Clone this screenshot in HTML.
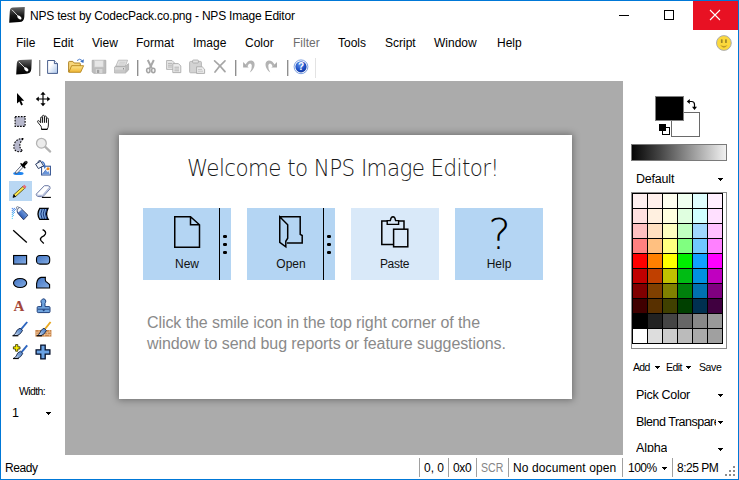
<!DOCTYPE html>
<html><head><meta charset="utf-8"><title>NPS Image Editor</title>
<style>
html,body{margin:0;padding:0;}
body{width:739px;height:480px;position:relative;overflow:hidden;background:#fff;font-family:"Liberation Sans",sans-serif;font-size:12px;color:#000;}
.t{position:absolute;white-space:nowrap;line-height:16px;}
.b{position:absolute;}
svg{position:absolute;overflow:visible;}
#frame{position:absolute;left:0;top:0;width:737px;height:478px;border:1px solid #0078d7;z-index:50;pointer-events:none;}
#canvas{position:absolute;left:65px;top:81px;width:558px;height:374px;background:#ababab;}
#close{position:absolute;left:693px;top:1px;width:45px;height:29px;background:#e81123;}
.sep{position:absolute;width:1px;height:16px;top:60px;background:#8f8f8f;border-right:1px solid #d4d4d4;}
.ssep{position:absolute;width:1px;height:19px;top:458px;background:#a0a0a0;}
.arr{position:absolute;width:5px;height:1px;background:#000;}
.arr:before{content:'';position:absolute;left:1px;top:1px;width:3px;height:1px;background:#000;}
.arr:after{content:'';position:absolute;left:2px;top:2px;width:1px;height:1px;background:#000;}
#dlg{position:absolute;left:119px;top:134.6px;width:453.2px;height:264.2px;background:#fff;box-shadow:0 0 7px 1px rgba(0,0,0,0.36);}
.btn{position:absolute;top:208px;width:88px;height:72px;background:#b4d5f3;}
.lbl{position:absolute;top:256px;width:88px;text-align:center;line-height:16px;color:#111;}
.split{position:absolute;top:208px;width:1px;height:72px;background:#000;}
.dot{position:absolute;width:4px;height:2.6px;background:#000;border-radius:1.2px;}
</style></head><body>
<div id="canvas"></div>
<svg style="left:9px;top:7px" width="16" height="16" viewBox="0 0 16 16"><defs><linearGradient id="ig" x1="0" y1="0" x2="0" y2="1"><stop offset="0" stop-color="#686868"/><stop offset="0.55" stop-color="#161616"/><stop offset="1" stop-color="#000"/></linearGradient></defs><path d="M4 0.6 L15.8 0 L15.3 10 Q15 15 10.5 15 L0.2 15.8 L0.8 4.4 Q1 0.9 4 0.6Z" fill="url(#ig)"/><path d="M3.2 3 L9 9" stroke="#e6e6e6" stroke-width="0.9" stroke-linecap="round"/><ellipse cx="10.4" cy="10.5" rx="2.5" ry="1.5" transform="rotate(42 10.4 10.5)" fill="#fff"/></svg>
<div class="t" style="left:30px;top:8px;letter-spacing:-0.2px">NPS test by CodecPack.co.png - NPS Image Editor</div>
<div class="b" style="left:619px;top:15px;width:10px;height:1px;background:#000"></div>
<div class="b" style="left:664px;top:10px;width:8px;height:8px;border:1px solid #000"></div>
<div id="close"></div>
<svg style="left:710px;top:10px" width="10" height="10" viewBox="0 0 10 10"><path d="M0 0L10 10M10 0L0 10" stroke="#fff" stroke-width="1.1"/></svg>
<div class="t" style="left:16px;top:35px">File</div>
<div class="t" style="left:53px;top:35px">Edit</div>
<div class="t" style="left:92px;top:35px">View</div>
<div class="t" style="left:136px;top:35px">Format</div>
<div class="t" style="left:193px;top:35px">Image</div>
<div class="t" style="left:245px;top:35px">Color</div>
<div class="t" style="left:293px;top:35px;color:#6d6d6d">Filter</div>
<div class="t" style="left:338px;top:35px">Tools</div>
<div class="t" style="left:385px;top:35px">Script</div>
<div class="t" style="left:434px;top:35px">Window</div>
<div class="t" style="left:497px;top:35px">Help</div>
<svg style="left:716px;top:35px" width="16" height="16" viewBox="0 0 16 16"><circle cx="7.9" cy="8" r="7.4" fill="#fcd93c" stroke="#a2a6b6" stroke-width="0.9"/><rect x="4.9" y="4.2" width="1.7" height="3.8" rx="0.6" fill="#9c8628"/><rect x="9.1" y="4.2" width="1.7" height="3.8" rx="0.6" fill="#9c8628"/><path d="M4.2 10 Q7.9 11.8 11.6 10 Q7.9 15.4 4.2 10Z" fill="#c09c28"/></svg>
<div class="sep" style="left:39px"></div><div class="sep" style="left:137px"></div><div class="sep" style="left:235px"></div><div class="sep" style="left:287px"></div><div class="b" style="left:315px;top:58px;width:1px;height:20px;background:#e3e3e3"></div>
<svg style="left:16px;top:59px" width="16" height="16" viewBox="0 0 16 16"><path d="M4 1 L15.8 0.5 L15.3 10 Q15 14.6 10.5 14.7 L0.2 15.4 L0.8 4.6 Q1 1.2 4 1Z" fill="url(#ig)"/><path d="M3.2 3.2 L9 9" stroke="#e6e6e6" stroke-width="0.9" stroke-linecap="round"/><ellipse cx="10.3" cy="10.4" rx="2.5" ry="1.5" transform="rotate(42 10.3 10.4)" fill="#fff"/></svg>
<svg style="left:45px;top:59px" width="16" height="16" viewBox="0 0 16 16"><defs><linearGradient id="ng" x1="0" y1="0" x2="1" y2="1"><stop offset="0.35" stop-color="#fff"/><stop offset="1" stop-color="#a9c4ea"/></linearGradient></defs><path d="M2.6 1.5 H9.4 L12.5 4.6 V14.4 H2.6Z" fill="url(#ng)" stroke="#2c447a" stroke-width="0.85"/><path d="M9.4 1.5 V4.6 H12.5" fill="#e6eefa" stroke="#2c447a" stroke-width="0.85"/></svg>
<svg style="left:68px;top:58px" width="17" height="16" viewBox="0 0 17 16"><defs><linearGradient id="fg" x1="0" y1="0" x2="0" y2="1"><stop offset="0" stop-color="#fde48c"/><stop offset="1" stop-color="#efb532"/></linearGradient></defs><path d="M0.6 14 V4.2 Q0.6 3.4 1.4 3.4 H4.8 L6.2 5 H11.5 Q12.3 5 12.3 5.8 V8" fill="#f7d67a" stroke="#a87a18" stroke-width="0.9"/><path d="M0.8 14.3 L3.6 7.7 H15.6 L12.6 14.3Z" fill="url(#fg)" stroke="#b5851a" stroke-width="0.9"/><path d="M9 2.6 Q11.6 -0.2 14.3 2.6" fill="none" stroke="#3a6fc4" stroke-width="0.9"/><path d="M15.9 1.3 L15.4 5 L12.2 3.4Z" fill="#3a6fc4"/></svg>
<svg style="left:91px;top:59px" width="16" height="16" viewBox="0 0 16 16"><path d="M1.2 1.3 H14.8 V14.3 H2.6 L1.2 12.9Z" fill="#bdbdbd" stroke="#a9a9a9" stroke-width="0.8"/><rect x="3.6" y="1.6" width="8.6" height="6.4" fill="#e6e6e6" stroke="#cfcfcf" stroke-width="0.6"/><rect x="4.8" y="10" width="6.6" height="4.2" fill="#d6d6d6"/><rect x="6" y="10.8" width="2.2" height="3.2" fill="#a2a2a2"/></svg>
<svg style="left:114px;top:59px" width="16" height="16" viewBox="0 0 16 16"><path d="M4.4 1.2 H13.6 L11.2 7.4 H1.8Z" fill="#e4e4e4" stroke="#b4b4b4" stroke-width="0.8"/><path d="M5.5 3.2 H11.5 M4.8 5 H10.8" stroke="#c2c2c2" stroke-width="0.7"/><path d="M0.6 8 L1.8 7.2 H11.4 L14.6 4.6 V11 L11.4 14 H0.6Z" fill="#bcbcbc" stroke="#a8a8a8" stroke-width="0.7"/><rect x="0.8" y="8.2" width="10.4" height="2.6" fill="#d9d9d9"/><rect x="0.8" y="11" width="10.4" height="2.8" fill="#c8c8c8"/><rect x="9" y="9" width="1" height="1.4" fill="#8e8e8e"/></svg>
<svg style="left:143px;top:59px" width="16" height="16" viewBox="0 0 16 16"><path d="M4.8 1 L8.8 9.2 M10.8 1 L6.8 9.2" stroke="#a8a8a8" stroke-width="2" fill="none"/><ellipse cx="5.3" cy="11.5" rx="1.7" ry="2.2" fill="#f4f4f4" stroke="#a4a4a4" stroke-width="1.5"/><ellipse cx="10.3" cy="11.5" rx="1.7" ry="2.2" fill="#f4f4f4" stroke="#a4a4a4" stroke-width="1.5"/></svg>
<svg style="left:166px;top:59px" width="16" height="16" viewBox="0 0 16 16"><path d="M0.6 1.5 H6 L8.4 3.9 V10.4 H0.6Z" fill="#e8e8e8" stroke="#b0b0b0" stroke-width="0.9"/><path d="M2 4.4 H6 M2 6.2 H6 M2 8 H6" stroke="#a8a8a8" stroke-width="0.8"/><path d="M6.8 4.6 H12.4 L14.8 7 V13.6 H6.8Z" fill="#ececec" stroke="#aaaaaa" stroke-width="0.9"/><path d="M8.4 8.2 H13 M8.4 10 H13 M8.4 11.8 H13" stroke="#a6a6a6" stroke-width="0.8"/></svg>
<svg style="left:189px;top:59px" width="17" height="16" viewBox="0 0 17 16"><rect x="0.6" y="2.4" width="11.8" height="11.4" rx="1" fill="#d3d3d3" stroke="#b0b0b0" stroke-width="0.9"/><rect x="3.6" y="1" width="5.8" height="3" rx="0.8" fill="#e2e2e2" stroke="#a6a6a6" stroke-width="0.8"/><path d="M7.6 7.8 H13.2 L15.6 10.2 V14.4 H7.6Z" fill="#ececec" stroke="#a8a8a8" stroke-width="0.9"/><path d="M9 10.4 H13 M9 12.2 H14" stroke="#b4b4b4" stroke-width="0.7"/></svg>
<svg style="left:212px;top:59px" width="16" height="16" viewBox="0 0 16 16"><path d="M2.6 1.8 Q7.6 5.8 13 12.6 M13 1.8 Q7.6 6.6 3 13" stroke="#a6a6a6" stroke-width="1.7" fill="none" stroke-linecap="round"/></svg>
<svg style="left:241px;top:59px" width="16" height="16" viewBox="0 0 16 16"><path d="M2.1 3 V8.6 H7.7Z" fill="#adadad"/><path d="M4.4 5.8 Q6.8 1.2 10.4 1.4 Q13.8 2 13.6 6 Q13.2 10.4 8.8 13.6 Q11.2 9.6 10.8 6.6 Q10.4 4.4 9 4.4 Q7.6 4.6 6.4 7.4Z" fill="#b3b3b3"/></svg>
<svg style="left:264px;top:59px" width="16" height="16" viewBox="0 0 16 16"><g transform="translate(15.1,0) scale(-1,1)"><path d="M2.1 3 V8.6 H7.7Z" fill="#adadad"/><path d="M4.4 5.8 Q6.8 1.2 10.4 1.4 Q13.8 2 13.6 6 Q13.2 10.4 8.8 13.6 Q11.2 9.6 10.8 6.6 Q10.4 4.4 9 4.4 Q7.6 4.6 6.4 7.4Z" fill="#b3b3b3"/></g></svg>
<svg style="left:293px;top:59px" width="16" height="16" viewBox="0 0 16 16"><defs><radialGradient id="hg" cx="0.4" cy="0.3" r="0.8"><stop offset="0" stop-color="#5f8fe8"/><stop offset="0.6" stop-color="#1c4fc4"/><stop offset="1" stop-color="#0d2f94"/></radialGradient></defs><circle cx="8" cy="7.8" r="6.9" fill="#fff" stroke="#6f96dd" stroke-width="0.9"/><circle cx="8" cy="7.8" r="5.6" fill="url(#hg)"/><text x="8" y="11.4" text-anchor="middle" font-family="Liberation Sans, sans-serif" font-weight="bold" font-size="10" fill="#fff">?</text></svg>
<div class="b" style="left:9px;top:181px;width:23px;height:20px;background:#b9d7f3"></div>
<svg width="0" height="0" style="left:0;top:0"><defs><linearGradient id="bl" x1="0" y1="0" x2="1" y2="1"><stop offset="0" stop-color="#3f72c2"/><stop offset="1" stop-color="#86aee4"/></linearGradient><linearGradient id="br" x1="1" y1="0" x2="0" y2="1"><stop offset="0" stop-color="#3b73c8"/><stop offset="0.5" stop-color="#7fa5d8"/><stop offset="1" stop-color="#e8eef8"/></linearGradient></defs></svg>
<svg style="left:12px;top:91px" width="16" height="16" viewBox="0 0 16 16"><path d="M5 2 V12.6 L7.4 10.4 L9.2 14.4 L10.9 13.6 L9.1 9.7 H12.2Z" fill="#000"/></svg>
<svg style="left:35px;top:91px" width="16" height="16" viewBox="0 0 16 16"><path d="M8 2.5 V13.5 M2.5 8 H13.5" stroke="#000" stroke-width="1.2"/><path d="M8 0.8 L10.6 3.8 H5.4Z M8 15.2 L10.6 12.2 H5.4Z M0.8 8 L3.8 5.4 V10.6Z M15.2 8 L12.2 5.4 V10.6Z" fill="#000"/></svg>
<svg style="left:12px;top:114px" width="16" height="16" viewBox="0 0 16 16"><rect x="3.1" y="2.6" width="10" height="9.8" fill="#b7b8cc" stroke="#000" stroke-width="1.1" stroke-dasharray="1.6 1.3"/></svg>
<svg style="left:35px;top:114px" width="16" height="17" viewBox="0 0 16 17"><path d="M6 12.2 L3.2 8.8 Q2 7.4 2.8 6.8 Q3.8 6.2 4.8 7.6 L5.6 8.8 V4.2 Q5.6 3 6.5 3 Q7.4 3 7.4 4.2 V2.4 Q7.4 1.3 8.4 1.3 Q9.4 1.3 9.4 2.4 V3 Q9.4 2 10.4 2 Q11.4 2 11.4 3.2 V5 Q11.4 4 12.4 4 Q13.4 4 13.4 5.2 V11 Q13.4 13.4 12.2 15.3 H6.6 Q6.6 13.6 6 12.2Z" fill="#fff" stroke="#222" stroke-width="1"/><path d="M7.4 4 V8.8 M9.4 3 V8.8 M11.4 5 V8.8" stroke="#000" stroke-width="1"/><path d="M6.4 15.4 H12.4" stroke="#000" stroke-width="1.2"/></svg>
<svg style="left:12px;top:137px" width="16" height="16" viewBox="0 0 16 16"><path d="M11.4 1.6 Q4.5 1.2 2.4 6.6 Q0.6 11.6 4.4 14.4 Q8 15.2 10.6 14 Q6.4 10.4 8.6 5.4 Q9.6 3.2 11.4 1.6Z" fill="#b7b8cc" stroke="#000" stroke-width="1.1" stroke-dasharray="1.6 1.3"/></svg>
<svg style="left:35px;top:137px" width="17" height="16" viewBox="0 0 17 16"><path d="M10 9.6 L15.2 14.6" stroke="#b2b2b2" stroke-width="2.2" stroke-linecap="round"/><circle cx="6.4" cy="6.2" r="4.9" fill="#ececec" stroke="#b4b4b4" stroke-width="1.3"/></svg>
<svg style="left:12px;top:160px" width="17" height="16" viewBox="0 0 17 16"><ellipse cx="6.4" cy="13.4" rx="5.2" ry="1.6" fill="#1e84f0"/><path d="M3.4 13.6 L3.9 11.4 L9.9 4.9 L11.7 6.6 L5.6 13 Z" fill="#f4f6fa" stroke="#424a60" stroke-width="0.8"/><path d="M9 3.8 L12.8 7.6" stroke="#000" stroke-width="1.5" stroke-linecap="round"/><path d="M11.2 5.4 L14 2.4" stroke="#000" stroke-width="3.2" stroke-linecap="round"/><circle cx="13.9" cy="1.9" r="0.7" fill="#8c8c8c"/></svg>
<svg style="left:35px;top:160px" width="17" height="17" viewBox="0 0 17 17"><rect x="6.6" y="6.2" width="8.8" height="8.8" fill="#fff" stroke="#2c4c8c" stroke-width="1"/><path d="M7.2 14.4 L10.8 10 L12.4 12 L13.4 11 L14.8 14.4Z" fill="#6a96da"/><path d="M7.2 14.4 L11.4 9.2" stroke="#3a62b0" stroke-width="0.7"/><circle cx="13" cy="8.8" r="1.5" fill="#f08a1c"/><path d="M0.6 4.2 L5.6 1.2 L8.6 5.8 L3.4 8.6Z" fill="#f2f5fa" stroke="#2a3c64" stroke-width="1"/><path d="M2.6 2.6 Q3.4 -0.6 6.2 1" fill="none" stroke="#2a3c64" stroke-width="0.9"/><path d="M6.8 1.6 Q9.8 2.4 9.8 7" fill="none" stroke="#3f72c2" stroke-width="1.3"/><path d="M8.5 6.6 L9.8 9 L11 6.6Z" fill="#3f72c2"/></svg>
<svg style="left:12px;top:183px" width="16" height="16" viewBox="0 0 16 16"><path d="M3.5 13.6 L12.7 5.3 L11 3.4 L1.8 11.7Z" fill="#ffe84a" stroke="#4a4000" stroke-width="0.8"/><path d="M12.7 5.3 L14.1 4 L12.4 2.1 L11 3.4Z" fill="#f2707c" stroke="#e05a68" stroke-width="0.7"/><path d="M1 14.4 L1.8 11.7 L3.5 13.6Z" fill="#000" stroke="#000" stroke-width="0.7"/></svg>
<svg style="left:35px;top:183px" width="17" height="16" viewBox="0 0 17 16"><path d="M9.4 2.7 H13 Q15.8 3 15 5.8 L8.8 12.8 Q8 13.6 6.6 13.6 H4 Q1 13.4 1.2 11.2 Z" fill="#fff" stroke="#6a78a4" stroke-width="1"/><path d="M1.8 11.8 Q3.2 12.6 6.4 12.4 Q7.6 12.4 8.4 11.6 L14.4 4.8" fill="none" stroke="#b4bedb" stroke-width="1.3"/><path d="M6.9 14.4 H15.9" stroke="#000" stroke-width="1.1"/></svg>
<svg style="left:12px;top:206px" width="17" height="16" viewBox="0 0 17 16"><defs><linearGradient id="ab" x1="0" y1="1" x2="1" y2="0"><stop offset="0.2" stop-color="#1c4cae"/><stop offset="0.75" stop-color="#7fa8e2"/><stop offset="1" stop-color="#3a66b8"/></linearGradient></defs><rect x="-0.2" y="1.9" width="1" height="1" fill="#286ee6"/><rect x="1.8" y="1.9" width="1" height="1" fill="#286ee6"/><rect x="0.8" y="2.9" width="1" height="1" fill="#2978e8"/><rect x="2.8" y="2.9" width="1" height="1" fill="#2978e8"/><rect x="-0.2" y="3.9" width="1" height="1" fill="#2b82ea"/><rect x="1.8" y="3.9" width="1" height="1" fill="#2b82ea"/><rect x="0.8" y="4.9" width="1" height="1" fill="#2d8cec"/><rect x="-0.2" y="5.9" width="1" height="1" fill="#2f96ef"/><rect x="1.8" y="5.9" width="1" height="1" fill="#2f96ef"/><rect x="0.8" y="6.9" width="1" height="1" fill="#31a0f1"/><rect x="-0.2" y="7.9" width="1" height="1" fill="#32aaf3"/><rect x="0.8" y="8.9" width="1" height="1" fill="#34b4f5"/><rect x="-0.2" y="9.9" width="1" height="1" fill="#36bef8"/><rect x="-0.2" y="11.9" width="1" height="1" fill="#3ad2fc"/><path d="M5.4 2.4 L7.2 1.6 Q9 2 10 3.4 L15.9 9.2 L11.6 13.8 L6 7.4 Q4.6 5.4 5.4 2.4Z" fill="url(#ab)" stroke="#26345a" stroke-width="0.9"/><path d="M5.6 2.8 L7.2 1.8 Q8.8 2.2 9.6 3.4 L6.4 6.6 Q5.2 5 5.6 2.8Z" fill="#f4f6fb"/><circle cx="5.6" cy="1.8" r="1.2" fill="#fafafa" stroke="#55607a" stroke-width="0.7"/></svg>
<svg style="left:35px;top:206px" width="16" height="16" viewBox="0 0 16 16"><path d="M4.8 2.4 H13 Q10 8 13.2 13.4 H4.8 Q1.2 8 4.8 2.4Z" fill="#7ba6dc" stroke="#000" stroke-width="1.3"/><path d="M7.2 2.8 Q4.4 8 7.2 13 M9.6 2.8 Q6.8 8 9.6 13 M11.8 2.8 Q9 8 11.8 13" fill="none" stroke="#16357a" stroke-width="1"/></svg>
<svg style="left:12px;top:229px" width="16" height="16" viewBox="0 0 16 16"><path d="M1.2 1.2 L14.8 13.6" stroke="#000" stroke-width="1.3"/></svg>
<svg style="left:35px;top:229px" width="16" height="16" viewBox="0 0 16 16"><path d="M7.6 0.6 Q11.4 2.4 10.4 5 Q9.6 6.8 6.6 8.2 Q4.6 9.6 6 11.6 Q7 12.8 8.8 14.4" fill="none" stroke="#000" stroke-width="1.3"/></svg>
<svg style="left:12px;top:252px" width="16" height="16" viewBox="0 0 16 16"><rect x="1.6" y="3.5" width="13" height="8.6" fill="url(#bl)" stroke="#000" stroke-width="1.1"/></svg>
<svg style="left:35px;top:252px" width="16" height="16" viewBox="0 0 16 16"><rect x="1.5" y="3.5" width="13.2" height="8.6" rx="3.4" fill="url(#bl)" stroke="#000" stroke-width="1.1"/></svg>
<svg style="left:12px;top:275px" width="16" height="16" viewBox="0 0 16 16"><ellipse cx="8.1" cy="8" rx="6.6" ry="4.5" fill="url(#bl)" stroke="#000" stroke-width="1.1"/></svg>
<svg style="left:35px;top:275px" width="16" height="16" viewBox="0 0 16 16"><path d="M1.6 13 V8.6 Q2.4 3.2 6 2.4 H10.4 Q9.6 6.4 12.4 7.6 L14.6 9.6 V13Z" fill="url(#bl)" stroke="#000" stroke-width="1.1"/></svg>
<div class="t" style="left:13.5px;top:297px;font-family:'Liberation Serif',serif;font-weight:bold;font-size:15px;line-height:18px;color:#a4463a">A</div>
<svg style="left:35px;top:298px" width="16" height="16" viewBox="0 0 16 16"><path d="M6.6 8.6 V5.4 Q5.4 3.8 6.2 2.4 Q7.2 0.8 8.8 0.8 Q10.6 1.2 10.8 3 Q10.8 4.4 10 5.4 V8.6 H14 Q15 8.6 15 9.6 V13.6 Q15 14.6 14 14.6 H3.2 Q2.2 14.6 2.2 13.6 V9.6 Q2.2 8.6 3.2 8.6Z" fill="#6fa3dd" stroke="#1f3f7a" stroke-width="1"/><path d="M3 11.2 H14.4" stroke="#1f3f7a" stroke-width="0.9"/><path d="M7 11.4 H10.4 L8.7 13.4Z" fill="#1f3f7a"/></svg>
<svg style="left:12px;top:321px" width="17" height="16" viewBox="0 0 17 16"><path d="M15.2 1 L9 8.4" stroke="#2e66c0" stroke-width="1.9"/><path d="M0.8 14.6 H5 Q8.6 13.6 10.6 9.4 L8 7.2 Q4.4 8.6 3.6 12 Q2.6 14 0.8 14.6Z" fill="url(#br)" stroke="#1c2a48" stroke-width="0.9"/><path d="M0.6 14.8 H6.4" stroke="#000" stroke-width="1"/></svg>
<svg style="left:35px;top:321px" width="17" height="17" viewBox="0 0 17 17"><rect x="0.4" y="9" width="16" height="6.6" fill="#c8854a"/><path d="M0.4 11.2 H16.4 M0.4 13.4 H16.4 M4 9 V11.2 M9.6 9 V11.2 M14.4 9 V11.2 M2 11.2 V13.4 M7 11.2 V13.4 M12.4 11.2 V13.4 M4 13.4 V15.6 M9.6 13.4 V15.6 M14.4 13.4 V15.6" stroke="#f0c8a0" stroke-width="0.7"/><path d="M15.6 1 L10 8" stroke="#e8a822" stroke-width="1.9"/><path d="M2.4 14.6 H6 Q9.6 13.6 11.4 9.4 L9 7.2 Q5.6 8.6 4.8 12 Q3.8 14 2.4 14.6Z" fill="url(#br)" stroke="#1c2a48" stroke-width="0.9"/><path d="M1.6 14.8 H7" stroke="#000" stroke-width="1"/></svg>
<svg style="left:12px;top:344px" width="17" height="16" viewBox="0 0 17 16"><path d="M15.2 1.4 L9.4 8.4" stroke="#2e66c0" stroke-width="1.9"/><path d="M1.4 14.4 H5.4 Q9 13.4 10.8 9.4 L8.4 7.2 Q5 8.6 4.2 12 Q3.2 13.8 1.4 14.4Z" fill="url(#br)" stroke="#1c2a48" stroke-width="0.9"/><path d="M1 14.6 H6.8" stroke="#000" stroke-width="1"/><path d="M3.6 0.6 H5.8 V2.8 H8 V5 H5.8 V7.2 H3.6 V5 H1.4 V2.8 H3.6Z" fill="#fff200" stroke="#2a2a00" stroke-width="0.8"/></svg>
<svg style="left:35px;top:344px" width="16" height="16" viewBox="0 0 16 16"><path d="M5.8 1.1 H10.2 V5.8 H14.9 V10.2 H10.2 V14.9 H5.8 V10.2 H1.1 V5.8 H5.8Z" fill="#6aa2e4" stroke="#06122c" stroke-width="1.3"/></svg>
<div class="t" style="left:19px;top:383px;font-size:10.5px;letter-spacing:-0.6px">Width:</div>
<div class="t" style="left:12px;top:405px;font-size:12.5px">1</div>
<div class="arr" style="left:46px;top:412px"></div>
<div class="b" style="left:671px;top:112px;width:27px;height:23px;border:1px solid #6a6a6a;background:#fff"></div>
<div class="b" style="left:655px;top:96px;width:27px;height:23px;border:1px solid #808080;background:#000"></div>
<svg style="left:686px;top:99px" width="12" height="12" viewBox="0 0 12 12"><path d="M2.5 2.5 H5.5 Q8.5 2.5 8.5 5.5 V8.5" fill="none" stroke="#000" stroke-width="1.2"/><path d="M0.8 2.5 L3.8 0 V5Z M8.5 11 L6 7.8 H11Z" fill="#000"/></svg>
<div class="b" style="left:662px;top:127px;width:6px;height:6px;border:1px solid #000;background:#fff"></div>
<div class="b" style="left:659px;top:124px;width:7px;height:7px;background:#000"></div>
<div class="b" style="left:631px;top:144px;width:94px;height:15px;border:1px solid #7a7a7a;background:linear-gradient(90deg,#050505,#464646 30%,#f1f1f1)"></div>
<div class="t" style="left:636px;top:171px;font-size:12.5px;letter-spacing:-0.2px">Default</div>
<div class="arr" style="left:718px;top:178px"></div>
<div class="b" style="left:631px;top:192px;width:94px;height:155px;border:1px solid #8a8a8a;background:#fff"></div>
<div class="b" style="left:632px;top:193px;width:91px;height:151px;background:#000"></div>
<div class="b" style="left:633px;top:194px;width:14px;height:14px;background:#fff0f0"></div><div class="b" style="left:648px;top:194px;width:14px;height:14px;background:#fff0ec"></div><div class="b" style="left:663px;top:194px;width:14px;height:14px;background:#fffff0"></div><div class="b" style="left:678px;top:194px;width:14px;height:14px;background:#f0fff0"></div><div class="b" style="left:693px;top:194px;width:14px;height:14px;background:#e0ffff"></div><div class="b" style="left:708px;top:194px;width:14px;height:14px;background:#fff0ff"></div>
<div class="b" style="left:633px;top:209px;width:14px;height:14px;background:#ffe0e0"></div><div class="b" style="left:648px;top:209px;width:14px;height:14px;background:#fff0e0"></div><div class="b" style="left:663px;top:209px;width:14px;height:14px;background:#ffffe0"></div><div class="b" style="left:678px;top:209px;width:14px;height:14px;background:#e0ffe0"></div><div class="b" style="left:693px;top:209px;width:14px;height:14px;background:#d0ffff"></div><div class="b" style="left:708px;top:209px;width:14px;height:14px;background:#ffe0ff"></div>
<div class="b" style="left:633px;top:224px;width:14px;height:14px;background:#ffc0c0"></div><div class="b" style="left:648px;top:224px;width:14px;height:14px;background:#ffe0c0"></div><div class="b" style="left:663px;top:224px;width:14px;height:14px;background:#ffffc0"></div><div class="b" style="left:678px;top:224px;width:14px;height:14px;background:#c0ffc0"></div><div class="b" style="left:693px;top:224px;width:14px;height:14px;background:#a0d8ff"></div><div class="b" style="left:708px;top:224px;width:14px;height:14px;background:#ffc0ff"></div>
<div class="b" style="left:633px;top:239px;width:14px;height:14px;background:#ff8080"></div><div class="b" style="left:648px;top:239px;width:14px;height:14px;background:#ffc080"></div><div class="b" style="left:663px;top:239px;width:14px;height:14px;background:#ffff80"></div><div class="b" style="left:678px;top:239px;width:14px;height:14px;background:#80ff80"></div><div class="b" style="left:693px;top:239px;width:14px;height:14px;background:#70c8ff"></div><div class="b" style="left:708px;top:239px;width:14px;height:14px;background:#ff80ff"></div>
<div class="b" style="left:633px;top:254px;width:14px;height:14px;background:#ff0000"></div><div class="b" style="left:648px;top:254px;width:14px;height:14px;background:#ff8000"></div><div class="b" style="left:663px;top:254px;width:14px;height:14px;background:#ffff00"></div><div class="b" style="left:678px;top:254px;width:14px;height:14px;background:#00f000"></div><div class="b" style="left:693px;top:254px;width:14px;height:14px;background:#10a0ff"></div><div class="b" style="left:708px;top:254px;width:14px;height:14px;background:#ff00ff"></div>
<div class="b" style="left:633px;top:269px;width:14px;height:14px;background:#c00000"></div><div class="b" style="left:648px;top:269px;width:14px;height:14px;background:#c04000"></div><div class="b" style="left:663px;top:269px;width:14px;height:14px;background:#c0c000"></div><div class="b" style="left:678px;top:269px;width:14px;height:14px;background:#00bc14"></div><div class="b" style="left:693px;top:269px;width:14px;height:14px;background:#0090e0"></div><div class="b" style="left:708px;top:269px;width:14px;height:14px;background:#c000c0"></div>
<div class="b" style="left:633px;top:284px;width:14px;height:14px;background:#800000"></div><div class="b" style="left:648px;top:284px;width:14px;height:14px;background:#804000"></div><div class="b" style="left:663px;top:284px;width:14px;height:14px;background:#808000"></div><div class="b" style="left:678px;top:284px;width:14px;height:14px;background:#00800c"></div><div class="b" style="left:693px;top:284px;width:14px;height:14px;background:#0070b0"></div><div class="b" style="left:708px;top:284px;width:14px;height:14px;background:#800080"></div>
<div class="b" style="left:633px;top:299px;width:14px;height:14px;background:#400000"></div><div class="b" style="left:648px;top:299px;width:14px;height:14px;background:#583000"></div><div class="b" style="left:663px;top:299px;width:14px;height:14px;background:#404000"></div><div class="b" style="left:678px;top:299px;width:14px;height:14px;background:#004000"></div><div class="b" style="left:693px;top:299px;width:14px;height:14px;background:#003050"></div><div class="b" style="left:708px;top:299px;width:14px;height:14px;background:#400040"></div>
<div class="b" style="left:633px;top:314px;width:14px;height:14px;background:#000000"></div><div class="b" style="left:648px;top:314px;width:14px;height:14px;background:#222222"></div><div class="b" style="left:663px;top:314px;width:14px;height:14px;background:#444444"></div><div class="b" style="left:678px;top:314px;width:14px;height:14px;background:#666666"></div><div class="b" style="left:693px;top:314px;width:14px;height:14px;background:#888888"></div><div class="b" style="left:708px;top:314px;width:14px;height:14px;background:#999999"></div>
<div class="b" style="left:633px;top:329px;width:14px;height:14px;background:#ffffff"></div><div class="b" style="left:648px;top:329px;width:14px;height:14px;background:#dddddd"></div><div class="b" style="left:663px;top:329px;width:14px;height:14px;background:#cccccc"></div><div class="b" style="left:678px;top:329px;width:14px;height:14px;background:#bbbbbb"></div><div class="b" style="left:693px;top:329px;width:14px;height:14px;background:#aaaaaa"></div><div class="b" style="left:708px;top:329px;width:14px;height:14px;background:#a0a0a0"></div>
<div class="t" style="left:633px;top:359px;font-size:10.5px;letter-spacing:-0.7px">Add</div>
<div class="arr" style="left:655px;top:366px"></div>
<div class="t" style="left:666px;top:359px;font-size:10.5px;letter-spacing:-0.6px">Edit</div>
<div class="arr" style="left:686px;top:366px"></div>
<div class="t" style="left:699px;top:359px;font-size:10.5px;letter-spacing:-0.4px">Save</div>
<div class="t" style="left:636px;top:387px;font-size:12.5px;letter-spacing:-0.3px">Pick Color</div>
<div class="arr" style="left:718px;top:394px"></div>
<div class="t" style="left:636px;top:414px;font-size:12.5px;letter-spacing:-0.5px;width:80px;overflow:hidden">Blend Transparency</div>
<div class="arr" style="left:718px;top:421px"></div>
<div class="t" style="left:636px;top:440px;font-size:12.5px;letter-spacing:-0.1px;height:12px;overflow:hidden">Alpha</div>
<div class="arr" style="left:718px;top:448px"></div>
<div class="t" style="left:5px;top:460px;letter-spacing:-0.4px">Ready</div>
<div class="ssep" style="left:419px"></div><div class="ssep" style="left:448px"></div><div class="ssep" style="left:476px"></div><div class="ssep" style="left:508px"></div><div class="ssep" style="left:622px"></div><div class="ssep" style="left:672px"></div>
<div class="t" style="left:424px;top:460px">0, 0</div>
<div class="t" style="left:453px;top:460px;letter-spacing:-0.3px">0x0</div>
<div class="t" style="left:481px;top:460px;color:#858585;transform:scaleX(0.88);transform-origin:0 0">SCR</div>
<div class="t" style="left:513px;top:460px;letter-spacing:0.12px">No document open</div>
<div class="t" style="left:628px;top:460px;letter-spacing:-0.5px">100%</div>
<div class="arr" style="left:662px;top:467px"></div>
<div class="t" style="left:677px;top:460px;letter-spacing:-0.5px">8:25 PM</div>
<svg style="left:725px;top:466px" width="10" height="10" viewBox="0 0 10 10"><g fill="#8c8c8c"><rect x="8" y="0" width="2" height="2"/><rect x="4" y="4" width="2" height="2"/><rect x="8" y="4" width="2" height="2"/><rect x="0" y="8" width="2" height="2"/><rect x="4" y="8" width="2" height="2"/><rect x="8" y="8" width="2" height="2"/></g></svg>
<div id="dlg"></div>
<div class="t" style="left:187px;top:154px;font-family:'DejaVu Sans Light','DejaVu Sans','Liberation Sans',sans-serif;font-weight:200;font-size:22.5px;line-height:28px;letter-spacing:-0.6px;color:#1a1a1a;transform:scaleX(0.952);transform-origin:0 0">Welcome to NPS Image Editor!</div>
<div class="btn" style="left:143px"></div><div class="btn" style="left:247px"></div><div class="btn" style="left:351px;background:#d9e9f9"></div><div class="btn" style="left:455px"></div>
<div class="split" style="left:219px"></div><div class="split" style="left:323px"></div>
<div class="dot" style="left:223px;top:235.2px"></div><div class="dot" style="left:223px;top:243.2px"></div><div class="dot" style="left:223px;top:251.2px"></div><div class="dot" style="left:327px;top:235.2px"></div><div class="dot" style="left:327px;top:243.2px"></div><div class="dot" style="left:327px;top:251.2px"></div>
<svg style="left:174px;top:216px" width="27" height="32" viewBox="0 0 27 32"><path d="M0.75 0.75 H16.5 L25.5 8.8 V31.2 H0.75Z M16.5 0.75 V8.8 H25.5" fill="none" stroke="#000" stroke-width="1.5" stroke-linejoin="miter"/></svg>
<svg style="left:279px;top:216px" width="24" height="32" viewBox="0 0 24 32"><path d="M0.75 0.75 H21.2 V18.3 L23.2 19.5 V27 H8 M0.75 0.75 V26.3 L6.8 30.8 V25.3 L8.7 22.2 V8.8 Z" fill="none" stroke="#000" stroke-width="1.5" stroke-linejoin="miter"/></svg>
<svg style="left:381px;top:216px" width="28" height="32" viewBox="0 0 28 32"><path d="M12.3 28.6 H0.8 V5 H6.2 M17.6 5 H23 V13" fill="none" stroke="#000" stroke-width="1.5"/><path d="M6.2 8.4 V4.6 H9.3 Q10 0.8 12 0.8 Q14 0.8 14.6 4.6 H17.6 V8.4 Z" fill="none" stroke="#000" stroke-width="1.4"/><rect x="12.6" y="13.2" width="14.2" height="17.6" fill="none" stroke="#000" stroke-width="1.5"/></svg>
<div class="lbl" style="left:143px">New</div><div class="lbl" style="left:247px">Open</div><div class="lbl" style="left:350.5px;letter-spacing:-0.3px">Paste</div><div class="lbl" style="left:455px">Help</div>
<div class="t" style="left:455.5px;top:211px;width:88px;text-align:center;font-family:'DejaVu Sans Light','DejaVu Sans','Liberation Sans',sans-serif;font-weight:200;font-size:42.5px;line-height:48px;">?</div>
<div class="t" style="left:147px;top:312px;font-size:16px;line-height:21px;color:#8a8a8a;letter-spacing:-0.08px">Click the smile icon in the top right corner of the<br>window to send bug reports or feature suggestions.</div>
<div id="frame"></div>
</body></html>
